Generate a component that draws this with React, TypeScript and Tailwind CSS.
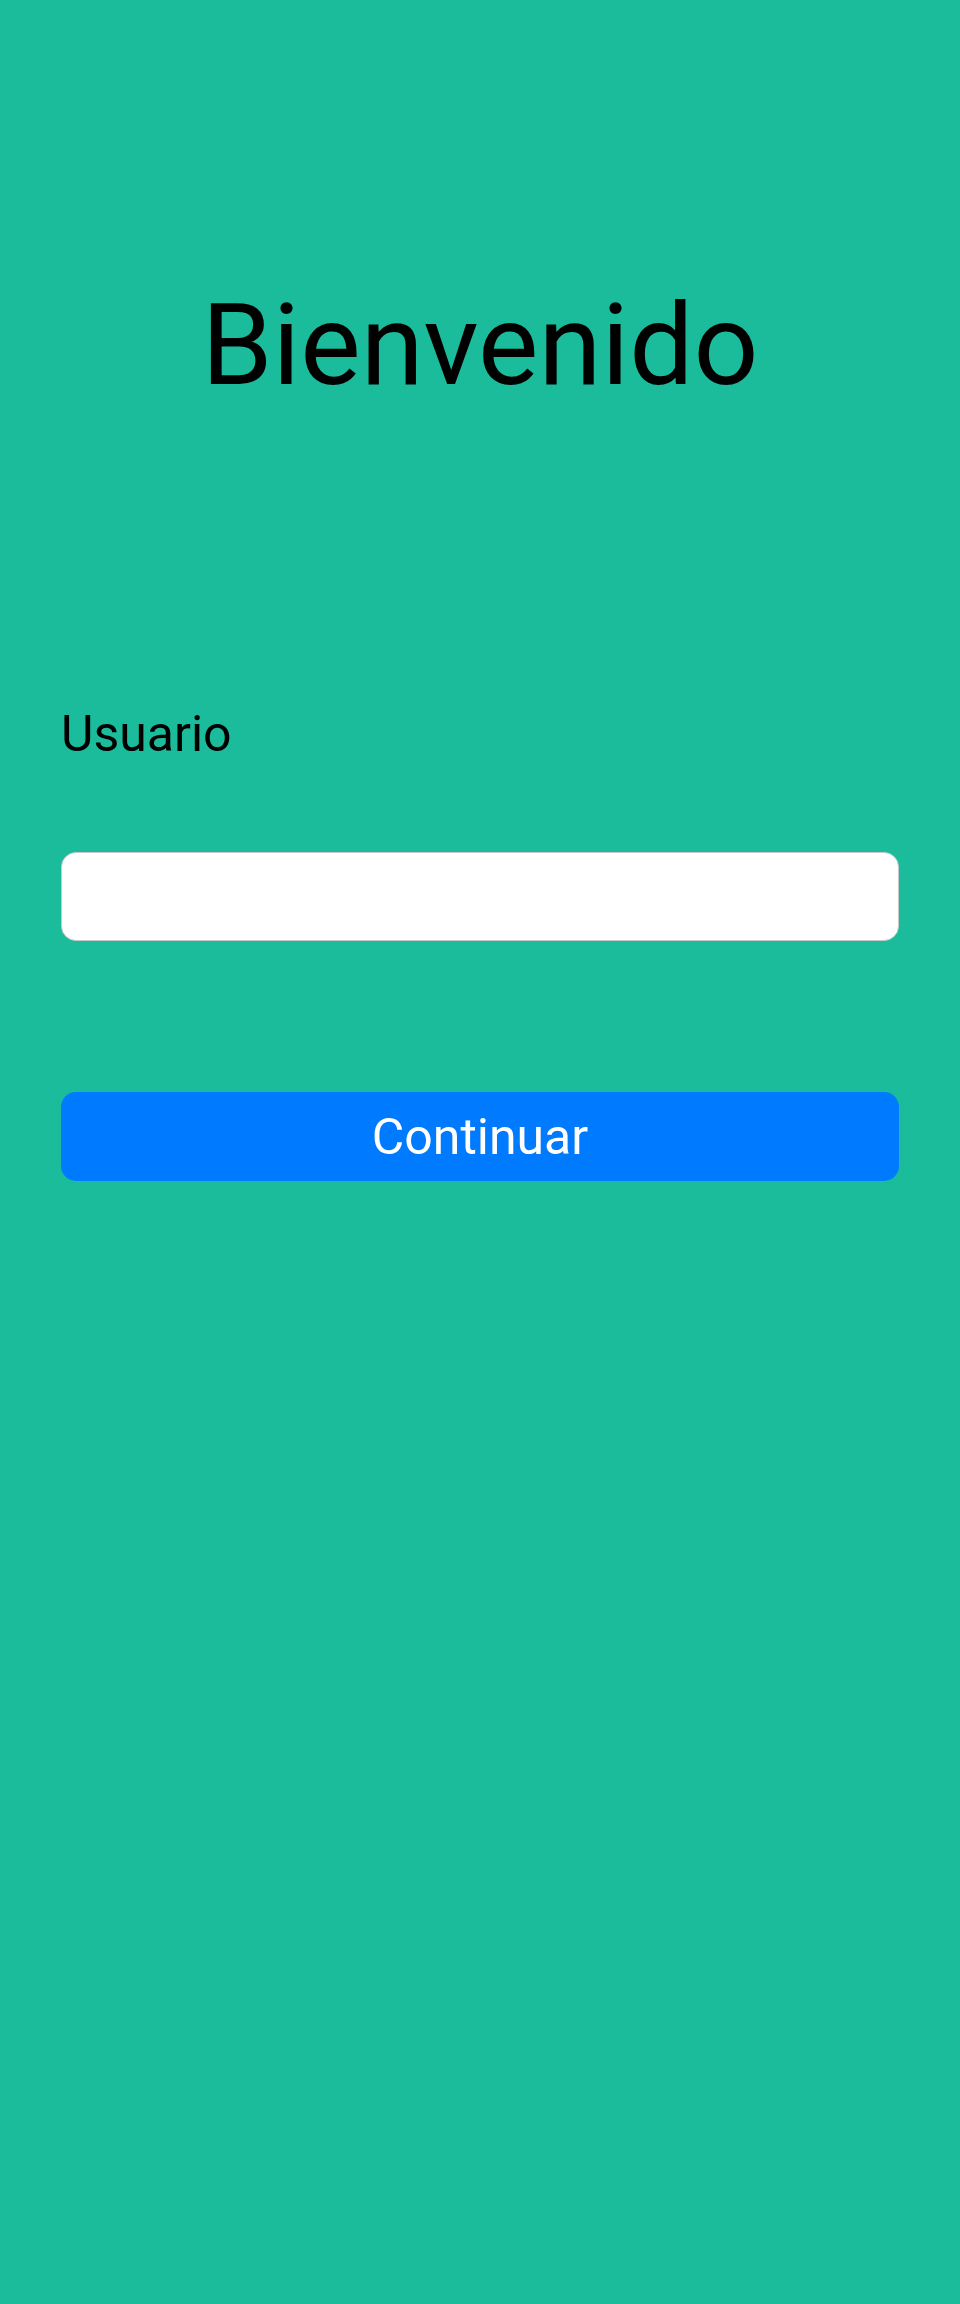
export default function App() {
  return (
    <div
      className="min-h-[2304px] w-full bg-[#1abc9c] px-[61px]"
      style={{ fontFamily: "Roboto, 'Liberation Sans', sans-serif" }}
    >
      <h1 className="pt-[288px] text-center text-[114px] leading-none font-normal text-black">
        Bienvenido
      </h1>
      <label className="mt-[307px] block text-[50px] leading-none text-black">
        Usuario
      </label>
      <input
        type="text"
        className="mt-[93px] block h-[89px] w-full rounded-[15px] border border-[#c8c8c8] bg-white px-4 text-[40px] outline-none"
      />
      <button className="mt-[151px] flex h-[89px] w-full items-center justify-center rounded-[15px] bg-[#007aff] text-[50px] leading-none text-white">
        Continuar
      </button>
    </div>
  );
}
